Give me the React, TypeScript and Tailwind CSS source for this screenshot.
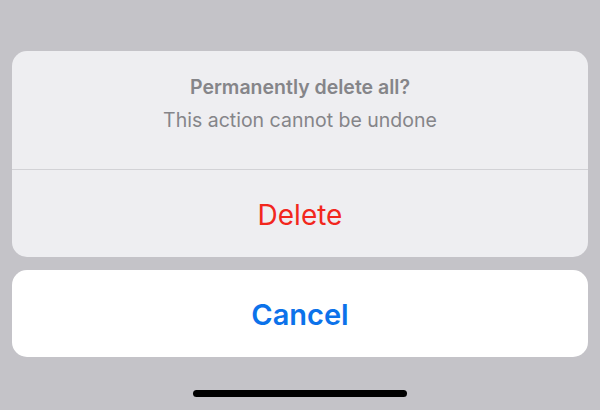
export default function App() {
  return (
    <div
      className="w-[600px] h-[410px] bg-[#c4c3c8] flex flex-col px-3 pt-[51px]"
      style={{ fontFamily: "Inter, 'Noto Sans', sans-serif" }}
    >
      <div className="bg-[#eeeef1] rounded-[15px] flex flex-col">
        <div className="h-[118px] flex flex-col items-center pt-[24px]">
          <div className="text-[19.5px] font-semibold text-[#858589] leading-[24px]">
            Permanently delete all?
          </div>
          <div className="text-[19.5px] text-[#858589] leading-[24px] mt-[9px]">
            This action cannot be undone
          </div>
        </div>
        <div className="h-px bg-[#d2d2d6]" />
        <div className="h-[87px] flex items-center justify-center pt-[2px]">
          <span className="text-[28px] text-[#f2271d] leading-none">Delete</span>
        </div>
      </div>
      <div className="mt-[13px] bg-white rounded-[15px] h-[87px] flex items-center justify-center pt-[2px]">
        <span className="text-[29px] font-semibold text-[#0c72ea] leading-none">Cancel</span>
      </div>
      <div className="mt-[33px] flex justify-center">
        <div className="w-[214px] h-[7px] rounded-full bg-black" />
      </div>
    </div>
  );
}
